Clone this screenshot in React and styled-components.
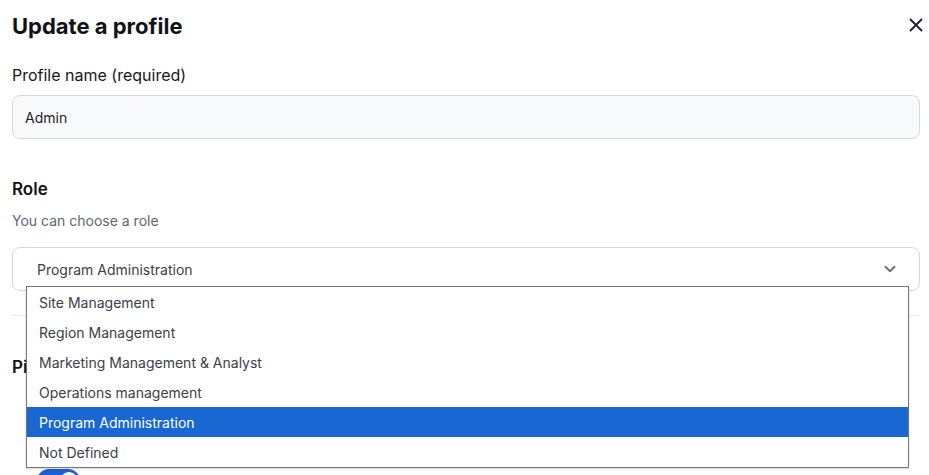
import React, { useState } from "react";
import styled, { createGlobalStyle } from "styled-components";

const roles = [
  "Site Management",
  "Region Management",
  "Marketing Management & Analyst",
  "Operations management",
  "Program Administration",
  "Not Defined",
];

const pages = [
  { name: "Dashboard", on: true },
  { name: "New Team", on: true },
];

const App = () => {
  const [role, setRole] = useState("Program Administration");
  const [open, setOpen] = useState(true);
  return (
    <Page>
      <GlobalStyle />
      <Header>
        <Title>Update a profile</Title>
        <CloseButton aria-label="Close">
          <svg width="14" height="14" viewBox="0 0 14 14" fill="none">
            <path
              d="M1.5 1.5L12.5 12.5M12.5 1.5L1.5 12.5"
              stroke="#1f2433"
              strokeWidth="1.9"
              strokeLinecap="round"
            />
          </svg>
        </CloseButton>
      </Header>

      <Label htmlFor="profile-name">Profile name (required)</Label>
      <TextInput id="profile-name" defaultValue="Admin" />

      <SectionTitle $top={38}>Role</SectionTitle>
      <Hint>You can choose a role</Hint>
      <SelectWrap>
        <SelectBox onClick={() => setOpen(!open)}>
          <span>{role}</span>
          <svg width="12" height="8" viewBox="0 0 12 8" fill="none">
            <path
              d="M1.5 1.8L6 6.2L10.5 1.8"
              stroke="#6b7280"
              strokeWidth="2"
              strokeLinecap="round"
              strokeLinejoin="round"
            />
          </svg>
        </SelectBox>
        {open && (
          <Options>
            {roles.map((r) => (
              <Option
                key={r}
                $active={r === role}
                onClick={() => {
                  setRole(r);
                  setOpen(false);
                }}
              >
                {r}
              </Option>
            ))}
          </Options>
        )}
      </SelectWrap>

      <Divider />

      <SectionTitle $top={0}>Pinned pages</SectionTitle>
      <ToggleList>
        {pages.map((p) => (
          <ToggleRow key={p.name}>
            <Switch $on={p.on} />
            <ToggleText>{p.name}</ToggleText>
          </ToggleRow>
        ))}
      </ToggleList>
    </Page>
  );
};

const GlobalStyle = createGlobalStyle`
  html, body {
    margin: 0;
    padding: 0;
    background: #fff;
  }
  body {
    font-family: Inter, "Noto Sans", sans-serif;
    color: #111318;
  }
  #root {
    min-height: 100vh;
  }
  button, input {
    font-family: inherit;
  }
`;

const Page = styled.div`
  padding: 12px 9px 40px 12px;
  display: flex;
  flex-direction: column;
`;

const Header = styled.div`
  display: flex;
  justify-content: space-between;
  align-items: flex-start;
`;

const Title = styled.h1`
  margin: 0;
  font-size: 22px;
  line-height: 28px;
  font-weight: 700;
  color: #111318;
`;

const CloseButton = styled.button`
  appearance: none;
  border: 0;
  background: none;
  padding: 0;
  margin: 6px -3px 0 0;
  width: 14px;
  height: 14px;
  display: flex;
  cursor: pointer;
`;

const Label = styled.label`
  margin-top: 23px;
  font-size: 16px;
  line-height: 24px;
  font-weight: 400;
  color: #16181d;
`;

const TextInput = styled.input`
  margin-top: 8px;
  height: 44px;
  box-sizing: border-box;
  border: 1px solid #d5d8de;
  border-radius: 8px;
  background: #f8f9fb;
  padding: 0 12px;
  font-size: 14px;
  color: #1b1e24;
  outline: none;
`;

const SectionTitle = styled.h2`
  margin: ${(p) => p.$top}px 0 0;
  font-size: 17px;
  line-height: 24px;
  font-weight: 600;
  color: #111318;
`;

const Hint = styled.p`
  margin: 10px 0 0;
  font-size: 14px;
  line-height: 20px;
  color: #5f6673;
`;

const SelectWrap = styled.div`
  position: relative;
  margin-top: 16px;
`;

const SelectBox = styled.div`
  height: 44px;
  box-sizing: border-box;
  border: 1px solid #d5d8de;
  border-radius: 8px;
  background: #fff;
  padding: 0 23px 0 24px;
  display: flex;
  align-items: center;
  justify-content: space-between;
  font-size: 14px;
  color: #3a404c;
  cursor: pointer;
`;

const Options = styled.ul`
  position: absolute;
  z-index: 5;
  top: 39px;
  left: 14px;
  width: 883px;
  box-sizing: border-box;
  margin: 0;
  padding: 0;
  list-style: none;
  background: #fff;
  border: 1px solid #767676;
  box-shadow: 0 1px 2px rgba(0, 0, 0, 0.18);
`;

const Option = styled.li`
  height: 30px;
  display: flex;
  align-items: center;
  padding: 0 12px;
  font-size: 14px;
  color: ${(p) => (p.$active ? "#fff" : "#3a404c")};
  background: ${(p) => (p.$active ? "#1967d2" : "#fff")};
  cursor: default;
`;

const Divider = styled.hr`
  margin: 24px 0 39px;
  border: 0;
  border-top: 1px solid #e6e8eb;
  height: 0;
`;

const ToggleList = styled.div`
  margin-top: 42px;
  padding-left: 25px;
  display: flex;
  flex-direction: column;
  gap: 24px;
`;

const ToggleRow = styled.div`
  display: flex;
  align-items: center;
  gap: 11px;
`;

const Switch = styled.span`
  position: relative;
  width: 43px;
  height: 24px;
  border-radius: 12px;
  background: ${(p) => (p.$on ? "#1a5fd6" : "#d1d5db")};
  flex-shrink: 0;

  &::after {
    content: "";
    position: absolute;
    top: 1px;
    left: ${(p) => (p.$on ? "21px" : "1px")};
    width: 18px;
    height: 18px;
    border-radius: 50%;
    background: #fff;
    border: 2px solid #1a5fd6;
  }
`;

const ToggleText = styled.span`
  font-size: 16px;
  line-height: 24px;
  color: #16181d;
`;

export default App;
